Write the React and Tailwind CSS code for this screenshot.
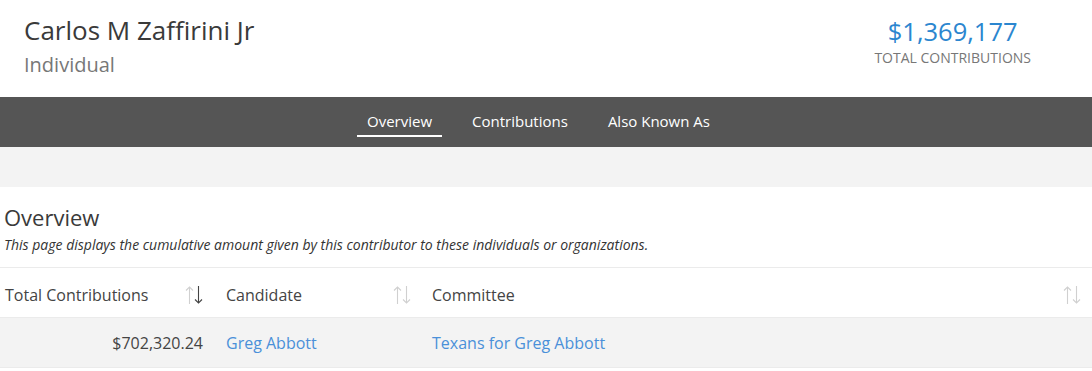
import React from "react";

const tabs = [
  { label: "Overview", active: true },
  { label: "Contributions" },
  { label: "Also Known As" },
];

function SortIcon({ active }) {
  return (
    <svg width="20" height="20" viewBox="0 0 20 20" fill="none" strokeWidth="1.1">
      <g stroke="#d0d0d0">
        <path d="M5.5 19V2" />
        <path d="M2 5.5L5.5 2L9 5.5" />
      </g>
      <g stroke={active ? "#444" : "#d0d0d0"}>
        <path d="M14.5 1V18" />
        <path d="M11 14.5L14.5 18L18 14.5" />
      </g>
    </svg>
  );
}

export default function App() {
  return (
    <div className="min-h-[371px] bg-white text-[#444]" style={{ fontFamily: '"Open Sans", "Liberation Sans", sans-serif' }}>
      <header className="flex h-[97px] items-start justify-between pl-6 pr-[61px]">
        <div className="pt-[12px]">
          <h1 className="text-[26px] leading-[36px] text-[#3a3a3a]">Carlos M Zaffirini Jr</h1>
          <p className="mt-[5px] text-[20px] leading-[24px] text-[#777]">Individual</p>
        </div>
        <div className="flex flex-col items-center pt-[14px]">
          <p className="text-[25.5px] leading-[34px] text-[#2b86cf]">$1,369,177</p>
          <p className="mt-[1px] text-[14px] leading-[18px] text-[#777]">TOTAL CONTRIBUTIONS</p>
        </div>
      </header>

      <nav className="flex h-[50px] items-stretch justify-center gap-[20px] bg-[#555] pr-[15px]">
        {tabs.map((tab) => (
          <div key={tab.label} className="flex flex-col items-stretch justify-center">
            <span className="px-[10px] pt-[2px] text-[15px] leading-[22px] text-white">{tab.label}</span>
            <span className={`mt-[3px] h-[2px] ${tab.active ? "bg-white" : "bg-transparent"}`} />
          </div>
        ))}
      </nav>

      <div className="h-[40px] bg-[#f3f3f3]" />

      <section className="pt-[15px]">
        <div className="px-[4px]">
          <h2 className="text-[22px] leading-[30px] text-[#3a3a3a]">Overview</h2>
          <p className="mt-[3px] text-[14px] italic leading-[20px] text-[#333]">
            This page displays the cumulative amount given by this contributor to these individuals or organizations.
          </p>
        </div>

        <table className="mt-[12px] w-full border-collapse text-[16px]">
          <thead>
            <tr className="h-[50px] border-y border-[#ebebeb] bg-white">
              <th className="w-[216px] pl-[5px] pr-[12px] pt-[5px] text-left font-normal text-[#444]">
                <div className="flex items-center justify-between">
                  <span>Total Contributions</span>
                  <SortIcon active />
                </div>
              </th>
              <th className="w-[206px] px-[10px] pt-[5px] text-left font-normal text-[#444]">
                <div className="flex items-center justify-between">
                  <span>Candidate</span>
                  <SortIcon />
                </div>
              </th>
              <th className="px-[10px] pt-[5px] text-left font-normal text-[#444]">
                <div className="flex items-center justify-between">
                  <span>Committee</span>
                  <SortIcon />
                </div>
              </th>
            </tr>
          </thead>
          <tbody>
            <tr className="h-[50px] border-b border-[#ebebeb] bg-[#f3f3f3]">
              <td className="px-[13px] text-right text-[#444]">$702,320.24</td>
              <td className="px-[10px] text-[#4a90d9]">Greg Abbott</td>
              <td className="px-[10px] text-[#4a90d9]">Texans for Greg Abbott</td>
            </tr>
          </tbody>
        </table>
      </section>
    </div>
  );
}
